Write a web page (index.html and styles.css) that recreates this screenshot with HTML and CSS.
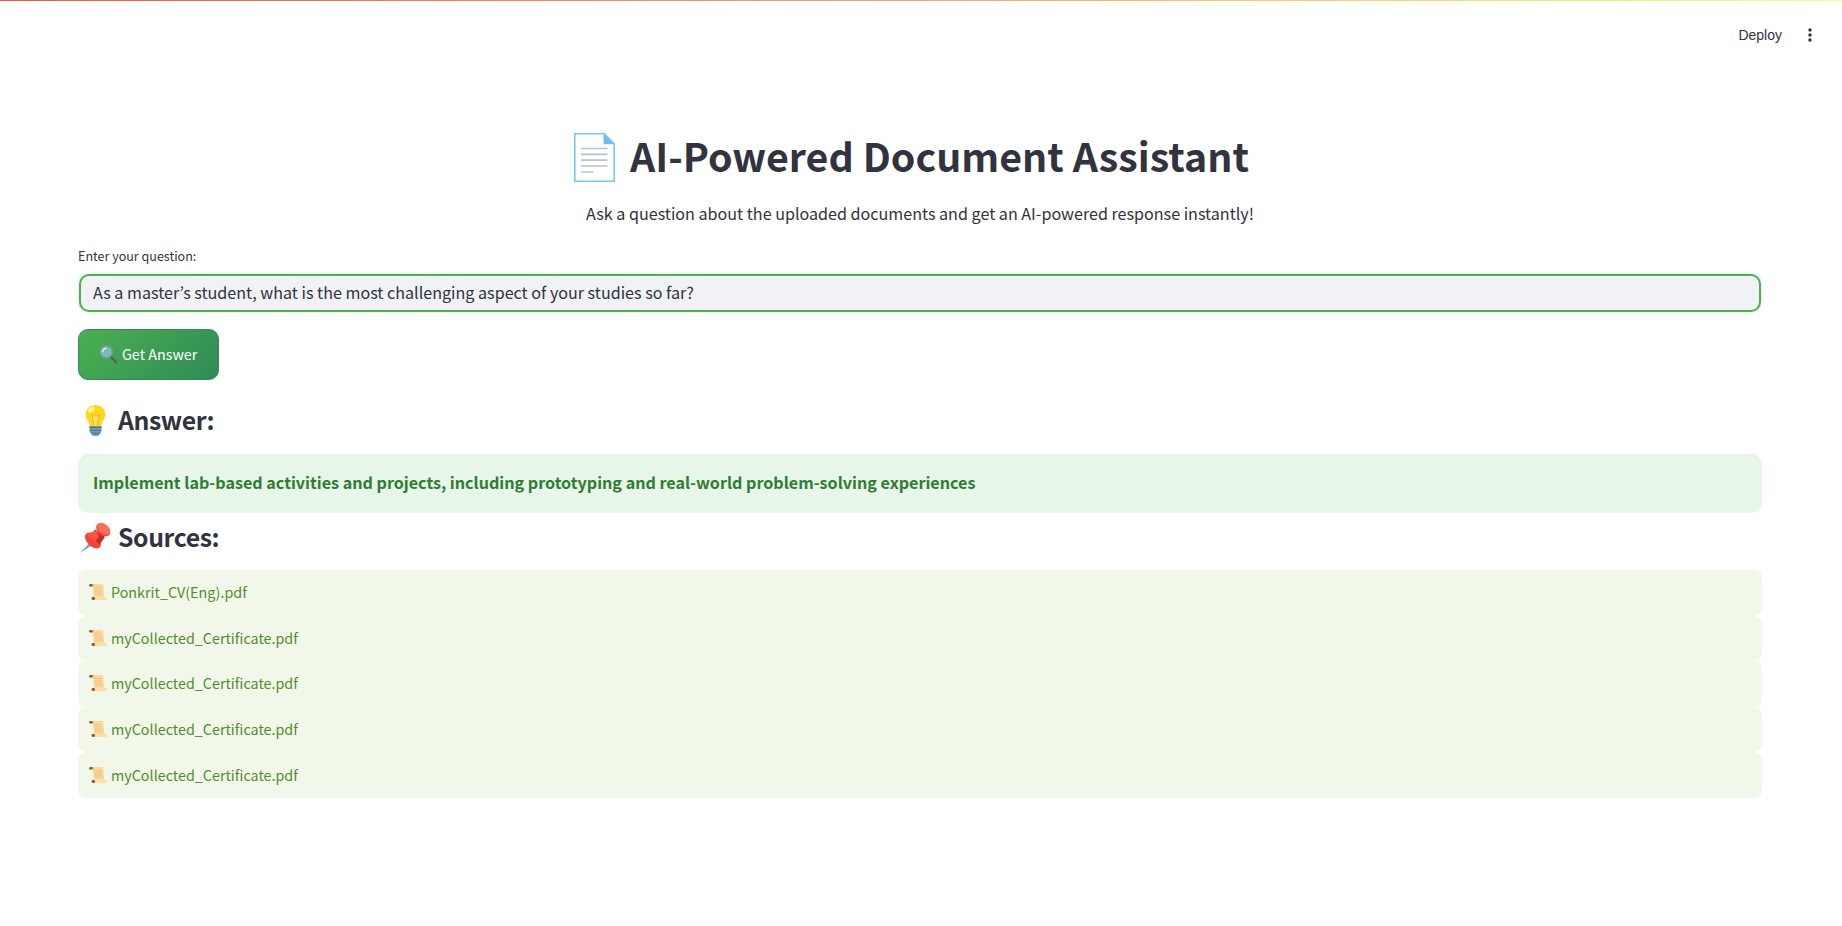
FILE: index.html
```html
<!DOCTYPE html>
<html lang="en">
<head>
<meta charset="utf-8">
<title>AI-Powered Document Assistant</title>
<link rel="stylesheet" href="styles.css">
</head>
<body>
<svg width="0" height="0" class="defs">
  <symbol id="scroll" viewBox="0 0 18 18">
    <path d="M2.2 1h10.6c1.2 0 1.4.6 1.5 1.700l.9 11.300H5L4 4z" fill="#fbd89c"/>
    <path d="M3.500 14h12.800c1.200-.2 1.700.6 1.500 1.400-.2 1.100-1 1.500-2 1.500H3.500z" fill="#ffdda6"/>
    <path d="M5.500 4.500h7.200M5.700 6.700h7.200M5.800 8.900h7.300M6 11.100h7.300" stroke="#e8b97c" stroke-width=".8" stroke-dasharray="2.500 .5"/>
    <path d="M1.500 1.100h2.800v2.400H1.500zM3.500 14.200h2.600v2.600H3.500z" fill="#b98055"/>
    <circle cx="1.500" cy="2.300" r="1.300" fill="#895130"/><circle cx="4" cy="15.500" r="1.400" fill="#895130"/>
  </symbol>
</svg>
<div class="rainbow"></div>
<header class="toolbar">
  <span class="deploy">Deploy</span>
  <svg class="dots" viewBox="0 0 4 14"><circle cx="2" cy="2" r="1.700"/><circle cx="2" cy="7" r="1.700"/><circle cx="2" cy="12" r="1.700"/></svg>
</header>
<main class="page">
  <h1 class="title">
    <svg class="doc" viewBox="0 0 41 49"><path d="M.8.8h29.500l9.900 10v37.400H.8z" fill="#fff" stroke="#7bc6f3" stroke-width="1.600"/><path d="M29.500.8l10.700 10.400H29.500z" fill="#6dbdf1"/><path d="M7 15.500h26.500M7 21.300h26.500M7 27.200h26.500M7 33h26.500M7 39h12.300" stroke="#b7c4c9" stroke-width="1.700"/></svg>
    <span class="title-text">AI-Powered Document Assistant</span>
  </h1>
  <p class="lead"><span>Ask a question about the uploaded documents and get an AI-powered response instantly!</span></p>
  <label class="label" for="q"><span>Enter your question:</span></label>
  <div class="field"><input class="input" id="q" type="text" value="As a master’s student, what is the most challenging aspect of your studies so far?"></div>
  <button class="button">
    <svg class="lens" viewBox="0 0 19 19"><path d="M11.500 11.500l6.300 6.300" stroke="#5b5d60" stroke-width="2.300"/><circle cx="7.300" cy="7" r="6" fill="#6fc0bd" stroke="#899395" stroke-width="1.300"/><path d="M3.600 6.600c.4-2 1.500-3 3.300-3.300" stroke="#c9f0ec" stroke-width="1.500" fill="none" stroke-linecap="round"/></svg>
    <span>Get Answer</span>
  </button>
  <h3 class="heading answer-heading">
    <svg class="bulb" viewBox="0 -1 32 32"><path d="M17.500 0C11.800 0 7.800 4 7.800 9.500c0 4.200 3 6.500 4.200 11.900h11c1.100-5.400 4.300-7.700 4.300-11.900C27.300 4 23.200 0 17.500 0z" fill="#fdd719"/><ellipse cx="13.300" cy="4.800" rx="3.800" ry="2.500" transform="rotate(-38 13.300 4.800)" fill="#fff48b"/><path d="M16 20.500l-2-11 2.300 2 1.200-2 1.300 2 2.200-2-2 11" fill="#ffe965" stroke="#f4aa2c" stroke-width=".9"/><path d="M11.600 21h11.800v6l-3.300 4h-5.200l-3.300-4z" fill="#769fae"/><path d="M11.300 22.500h12.400M11.600 25.300h11.800M13 28.200h9" stroke="#3d7186" stroke-width="1"/></svg>
    <span>Answer:</span>
  </h3>
  <div class="answer"><span>Implement lab-based activities and projects, including prototyping and real-world problem-solving experiences</span></div>
  <h3 class="heading source-heading">
    <svg class="pin" viewBox="0 -1 32 32"><path d="M13 19.500l3 2.500L1.800 31z" fill="#7ba5b5"/><ellipse cx="15" cy="18.500" rx="9.600" ry="5.800" transform="rotate(44 15 18.500)" fill="#f5443a"/><path d="M17 7.500l10 7.500-5.500 7.500-9-8.500z" fill="#c62929"/><path d="M8.500 13c3-3 7-3 10-5l2.500 7-4 4z" fill="#fa5547"/><ellipse cx="25.300" cy="7.700" rx="8" ry="5.500" transform="rotate(40 25.300 7.700)" fill="#f5443a"/><ellipse cx="25.700" cy="6.800" rx="7.300" ry="4.500" transform="rotate(40 25.700 6.800)" fill="#ff7059"/></svg>
    <span>Sources:</span>
  </h3>
  <div class="sources">
    <div class="source"><svg class="scroll"><use href="#scroll"/></svg><span>Ponkrit_CV(Eng).pdf</span></div>
    <div class="source"><svg class="scroll"><use href="#scroll"/></svg><span>myCollected_Certificate.pdf</span></div>
    <div class="source"><svg class="scroll"><use href="#scroll"/></svg><span>myCollected_Certificate.pdf</span></div>
    <div class="source"><svg class="scroll"><use href="#scroll"/></svg><span>myCollected_Certificate.pdf</span></div>
    <div class="source"><svg class="scroll"><use href="#scroll"/></svg><span>myCollected_Certificate.pdf</span></div>
  </div>
</main>
</body>
</html>
```
FILE: styles.css
```css
* { box-sizing: border-box; }
body { margin: 0; background: #fff; color: #31333f; font-family: "Noto Sans CJK KR", "Noto Sans", sans-serif; overflow: hidden; }
.defs { display: block; position: absolute; }
.rainbow { height: 1px; background: linear-gradient(90deg, #ff4b4b, #fffd80); }
.toolbar { height: 68px; display: flex; align-items: center; justify-content: flex-end; padding-right: 30px; gap: 26px; }
.deploy { font: 14px/20px "Liberation Sans", Arial, sans-serif; }
.dots { width: 4px; height: 14px; fill: #31333f; }
.page { padding: 0 80px 0 78px; display: flex; flex-direction: column; }
.title { margin: 53px 0 0; height: 70px; display: flex; align-items: center; justify-content: center; gap: 15px; font-size: 39.370px; line-height: 52px; font-weight: 700; white-space: nowrap; padding-right: 17px; }
.title-text { padding-bottom: 4px; }
.doc { width: 41px; height: 49px; }
.lead { margin: 8px 0 0; height: 26px; text-align: center; font-size: 16.130px; line-height: 26px; }
.label { margin-top: 20px; height: 20px; font-size: 12.540px; line-height: 20px; }
.field { margin-top: 7px; height: 40px; border: 1px solid #f0f2f6; border-radius: 8px; background: #f0f2f6; overflow: hidden; display: flex; }
.input { width: 100%; border: 2px solid #4caf50; border-radius: 10px; background: #f0f2f6; color: #31333f; font: 16.130px/24px "Noto Sans CJK KR", "Noto Sans", sans-serif; padding: 0 12px 2px; outline: 0; }
.button { margin: 16px 0 0; width: 141px; height: 51px; border: 1px solid #37875a; border-radius: 10px; background: linear-gradient(135deg, #4caf50, #2e8b57); color: #fff; font: 14.340px/24px "Noto Sans CJK KR", "Noto Sans", sans-serif; display: flex; align-items: center; padding: 0 0 1px 20px; gap: 4px; white-space: nowrap; }
.lens { width: 19px; height: 19px; }
.heading { margin: 0; display: flex; align-items: center; gap: 8px; height: 34px; font-size: 24.800px; line-height: 32px; font-weight: 600; letter-spacing: -.4px; }
.heading span { padding-bottom: 2px; }
.bulb, .pin { width: 32px; height: 32px; }
.answer-heading { margin-top: 23px; }
.answer { margin-top: 17px; height: 59px; border-radius: 10px; background: #e8f5e9; color: #2e7d32; padding: 0 15px; font-size: 16.130px; line-height: 57px; font-weight: 700; }
.source-heading { margin-top: 7px; }
.sources { margin-top: 16px; display: flex; flex-direction: column; }
.source { height: 45.600px; border-radius: 8px; background: #f1f8e9; color: #558b2f; display: flex; align-items: center; padding: 0 0 1px 11px; gap: 4px; font-size: 14.340px; line-height: 24px; }
.scroll { width: 18px; height: 18px; }
```
